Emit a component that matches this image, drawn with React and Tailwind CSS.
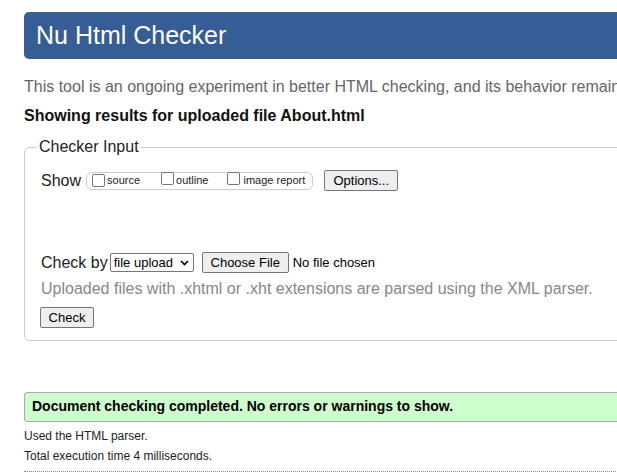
import React from 'react';

const Box = () => (
  <span className="inline-block w-[13px] h-[13px] border border-[#767676] rounded-[2px] bg-white shrink-0" />
);

const Btn = ({ children, className = '' }) => (
  <span
    className={`inline-flex items-center justify-center whitespace-nowrap h-[21px] px-[8px] bg-[#efefef] border border-[#767676] rounded-[2px] text-[13px] text-black ${className}`}
  >
    {children}
  </span>
);

export default function App() {
  return (
    <div className="w-[617px] h-[476px] overflow-hidden bg-white font-['Liberation_Sans',Arial,sans-serif] text-[#222]">
      <div className="ml-[24px] w-[1000px] pt-[12px]">
        {/* header */}
        <div className="h-[47px] rounded-[5px] bg-[#365d95] text-white text-[25px] leading-[47px] pl-[12px]">
          Nu Html Checker
        </div>

        <p className="mt-[19px] w-[593px] overflow-hidden text-[16px] leading-[18px] text-[#666] whitespace-nowrap">
          This tool is an ongoing experiment in better HTML checking, and its behavior remain
        </p>
        <p className="mt-[11px] text-[16px] leading-[18px] font-bold text-[#111]">
          Showing results for uploaded file About.html
        </p>

        {/* checker input */}
        <fieldset className="mt-[13px] border border-[#ccc] rounded-[6px] pl-[12px] pr-[12px] pb-[11px]">
          <legend className="px-[2px] text-[16px] leading-[18px] text-[#222]">Checker Input</legend>
          <div className="pl-[4px]">
            <div className="mt-[14px] flex items-center h-[21px]">
              <span className="text-[16px] leading-[18px]">Show</span>
              <div className="ml-[5px] flex items-center h-[18px] border border-[#ccc] rounded-[6px] pl-[5px] pr-[7px] text-[11px]">
                <Box />
                <span className="ml-[2px]">source</span>
                <span className="ml-[21px]"><Box /></span>
                <span className="ml-[2px]">outline</span>
                <span className="ml-[19px]"><Box /></span>
                <span className="ml-[3px]">image report</span>
              </div>
              <Btn className="ml-[11px] w-[74px]">Options...</Btn>
            </div>

            <div className="mt-[61px] flex items-center h-[21px]">
              <span className="text-[16px] leading-[18px]">Check by</span>
              <span className="ml-[2px] inline-flex items-center justify-between w-[84px] h-[19px] border border-[#767676] rounded-[2px] bg-white text-[13px] text-black pl-[3px] pr-[4px]">
                file upload
                <svg width="9" height="6" viewBox="0 0 9 6" fill="none">
                  <path d="M1 1l3.5 3.5L8 1" stroke="#000" strokeWidth="1.6" />
                </svg>
              </span>
              <Btn className="ml-[8px] w-[87px]">Choose File</Btn>
              <span className="ml-[4px] text-[13px] text-black">No file chosen</span>
            </div>

            <p className="mt-[7px] text-[16px] leading-[18px] text-[#888]">
              Uploaded files with .xhtml or .xht extensions are parsed using the XML parser.
            </p>

            <Btn className="mt-[9px] -ml-[1px] w-[54px] h-[20px]">Check</Btn>
          </div>
        </fieldset>

        {/* result */}
        <div className="mt-[51px] h-[30px] flex items-center border border-[#aaa] rounded-[3px] bg-[#ccffcc] pl-[7px] text-[14px] font-bold text-black">
          Document checking completed. No errors or warnings to show.
        </div>
        <p className="mt-[7px] text-[12px] leading-[14px] text-[#222]">Used the HTML parser.</p>
        <p className="mt-[6px] text-[12px] leading-[14px] text-[#222]">Total execution time 4 milliseconds.</p>
        <div className="mt-[8px] border-b border-dotted border-[#888]" />
      </div>
    </div>
  );
}
